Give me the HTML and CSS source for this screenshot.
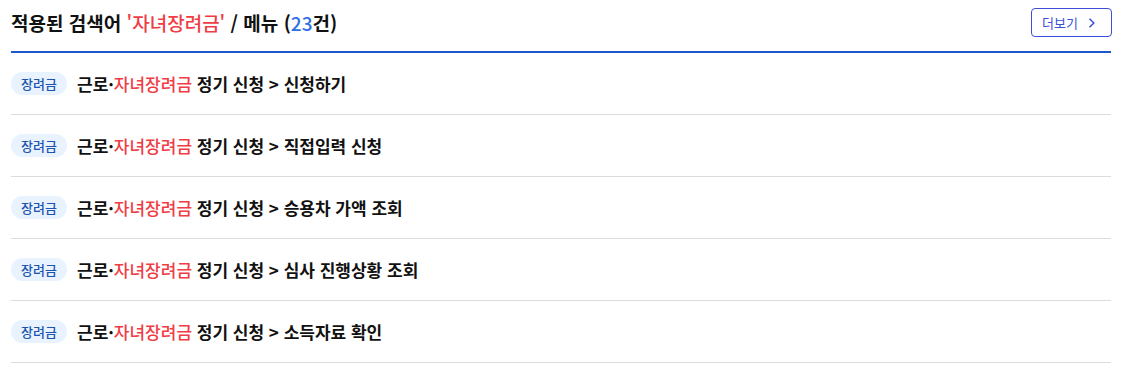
FILE: index.html
```html
<!DOCTYPE html>
<html lang="ko">
<head>
<meta charset="utf-8">
<link rel="stylesheet" href="styles.css">
</head>
<body>
<section class="result">
  <header class="result-head">
    <h2 class="title">적용된 검색어 <span class="kw">'자녀장려금'</span> / 메뉴 (<span class="cnt">23</span>건)</h2>
    <button class="more" type="button">더보기
      <svg width="8" height="12" viewBox="0 0 8 12"><path d="M1.5 1.8 L5.8 6 L1.5 10.2" fill="none" stroke="#3b4fd8" stroke-width="1.5"/></svg>
    </button>
  </header>
  <ul class="list">
    <li class="item"><span class="badge">장려금</span><span class="txt">근로·<em>자녀장려금</em> 정기 신청 &gt; 신청하기</span></li>
    <li class="item"><span class="badge">장려금</span><span class="txt">근로·<em>자녀장려금</em> 정기 신청 &gt; 직접입력 신청</span></li>
    <li class="item"><span class="badge">장려금</span><span class="txt">근로·<em>자녀장려금</em> 정기 신청 &gt; 승용차 가액 조회</span></li>
    <li class="item"><span class="badge">장려금</span><span class="txt">근로·<em>자녀장려금</em> 정기 신청 &gt; 심사 진행상황 조회</span></li>
    <li class="item"><span class="badge">장려금</span><span class="txt">근로·<em>자녀장려금</em> 정기 신청 &gt; 소득자료 확인</span></li>
  </ul>
</section>
</body>
</html>
```
FILE: styles.css
```css
* { box-sizing: border-box; }
body {
  margin: 0;
  background: #fff;
  font-family: "Noto Sans CJK KR", "Noto Sans", sans-serif;
  color: #111;
}
.result {
  width: 1100px;
  margin-left: 11px;
}
.result-head {
  height: 53px;
  display: flex;
  align-items: center;
  justify-content: space-between;
  border-bottom: 2px solid #1f56c8;
  padding-bottom: 6px;
}
.title {
  margin: 0;
  font-size: 19px;
  font-weight: 700;
  color: #111;
}
.kw { color: #f03c44; font-weight: 500; }
.cnt { color: #2f6fe6; font-weight: 500; }
.more {
  display: flex;
  align-items: center;
  gap: 10px;
  height: 29px;
  width: 81px;
  padding: 0 0 0 10px;
  margin-right: -1px;
  border: 1px solid #3b4fd8;
  border-radius: 4px;
  background: #fff;
  color: #3b4fd8;
  font-family: inherit;
  font-size: 13px;
  font-weight: 400;
}
.list {
  list-style: none;
  margin: 0;
  padding: 0;
}
.item {
  height: 62px;
  display: flex;
  align-items: center;
  gap: 10px;
  border-bottom: 1px solid #dcdcdc;
}
.badge {
  display: inline-flex;
  align-items: center;
  justify-content: center;
  width: 56px;
  height: 23px;
  border-radius: 12px;
  background: #e9f3ff;
  color: #1d55ae;
  font-size: 13px;
  font-weight: 500;
}
.txt {
  font-size: 17px;
  font-weight: 600;
  color: #111;
}
.txt em {
  font-style: normal;
  color: #f03c44;
  font-weight: 500;
}
```
